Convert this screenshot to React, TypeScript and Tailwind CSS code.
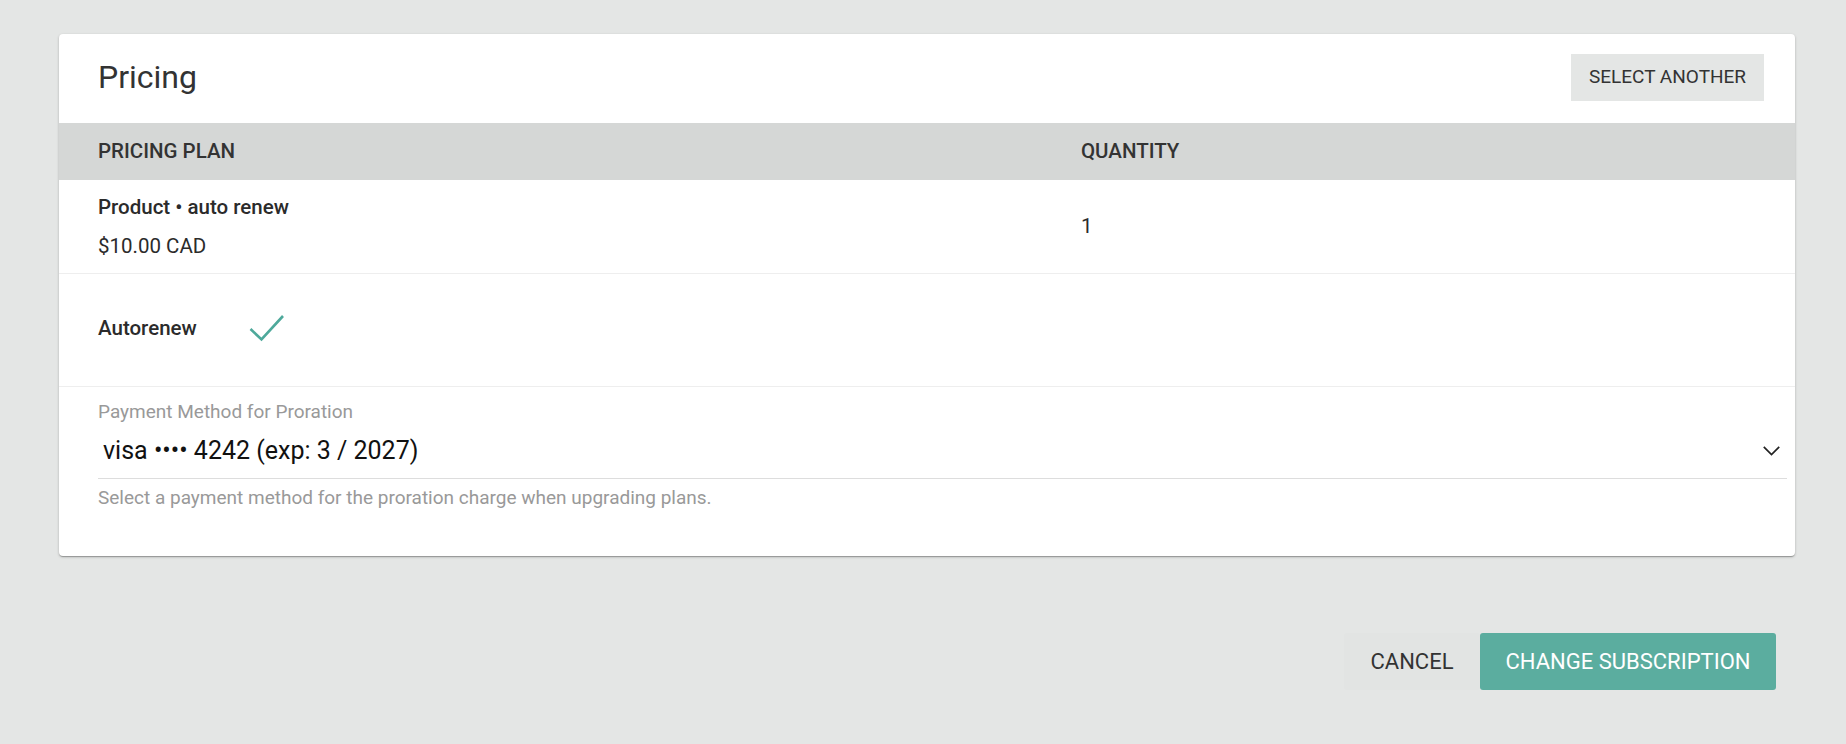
import { useState } from 'react';

export default function App() {
  const [method, setMethod] = useState('visa •••• 4242 (exp: 3 / 2027)');
  const autoRenew = true;

  return (
    <div className="min-h-screen bg-[#e4e6e5] pl-[59px] pr-[51px] pt-[34px] font-[family-name:Roboto,sans-serif] text-[#333]">
      <div className="rounded-[4px] bg-white shadow-[0_1px_3px_rgba(0,0,0,0.2),0_1px_1px_rgba(0,0,0,0.14),0_2px_1px_-1px_rgba(0,0,0,0.12)]">
        <div className="flex h-[89px] items-center justify-between pl-[39px] pr-[31px]">
          <h1 className="mb-[4px] text-[32px] leading-none text-[#333]">Pricing</h1>
          <button className="mb-[3px] h-[47px] w-[193px] bg-[#e4e6e5] text-[19px] uppercase text-[#333]">
            Select another
          </button>
        </div>

        <div className="grid h-[57px] grid-cols-[983px_1fr] items-center bg-[#d5d7d6] px-[39px] text-[20.5px] font-medium uppercase text-[#333]">
          <div>Pricing plan</div>
          <div>Quantity</div>
        </div>

        <div className="grid grid-cols-[983px_1fr] items-center border-b border-[#eeeeee] px-[39px] py-[13px] text-[20.5px] text-[#2b2b2b]">
          <div className="flex flex-col gap-[11px]">
            <div className="font-medium leading-[28px]">Product • auto renew</div>
            <div className="leading-[28px]">$10.00 CAD</div>
          </div>
          <div>1</div>
        </div>

        <div className="flex h-[113px] items-center border-b border-[#eeeeee] px-[39px] pb-[4px]">
          <div className="w-[151px] text-[20.5px] font-medium text-[#2b2b2b]">Autorenew</div>
          {autoRenew && (
            <svg width="36" height="28" viewBox="0 0 36 28" fill="none">
              <polyline points="1.5,15 12.5,25.5 34,2" stroke="#4ea99b" strokeWidth="2.6" />
            </svg>
          )}
        </div>

        <div className="pb-[46px] pl-[39px] pr-[8px] pt-[13px]">
          <div className="text-[19px] leading-[24px] text-[#999]">Payment Method for Proration</div>
          <label className="flex h-[55px] items-center justify-between border-b border-[#dddddd]">
            <select
              value={method}
              onChange={(e) => setMethod(e.target.value)}
              className="w-full appearance-none bg-transparent pl-[5px] text-[25px] text-[#111] outline-none"
            >
              <option>visa •••• 4242 (exp: 3 / 2027)</option>
            </select>
            <svg className="mr-[7px] shrink-0" width="17" height="10" viewBox="0 0 17 10" fill="none">
              <polyline points="0.8,0.8 8.5,8.5 16.2,0.8" stroke="#222" strokeWidth="1.7" />
            </svg>
          </label>
          <p className="mt-[7px] text-[19px] leading-[24px] text-[#999]">
            Select a payment method for the proration charge when upgrading plans.
          </p>
        </div>
      </div>

      <div className="mt-[77px] flex justify-end pr-[19px]">
        <button className="h-[57px] w-[136px] rounded-[3px] bg-[#e2e4e3] text-[22px] uppercase text-[#333]">
          Cancel
        </button>
        <button className="h-[57px] w-[296px] rounded-[3px] bg-[#5bad9f] text-[22px] uppercase text-white">
          Change subscription
        </button>
      </div>
    </div>
  );
}
